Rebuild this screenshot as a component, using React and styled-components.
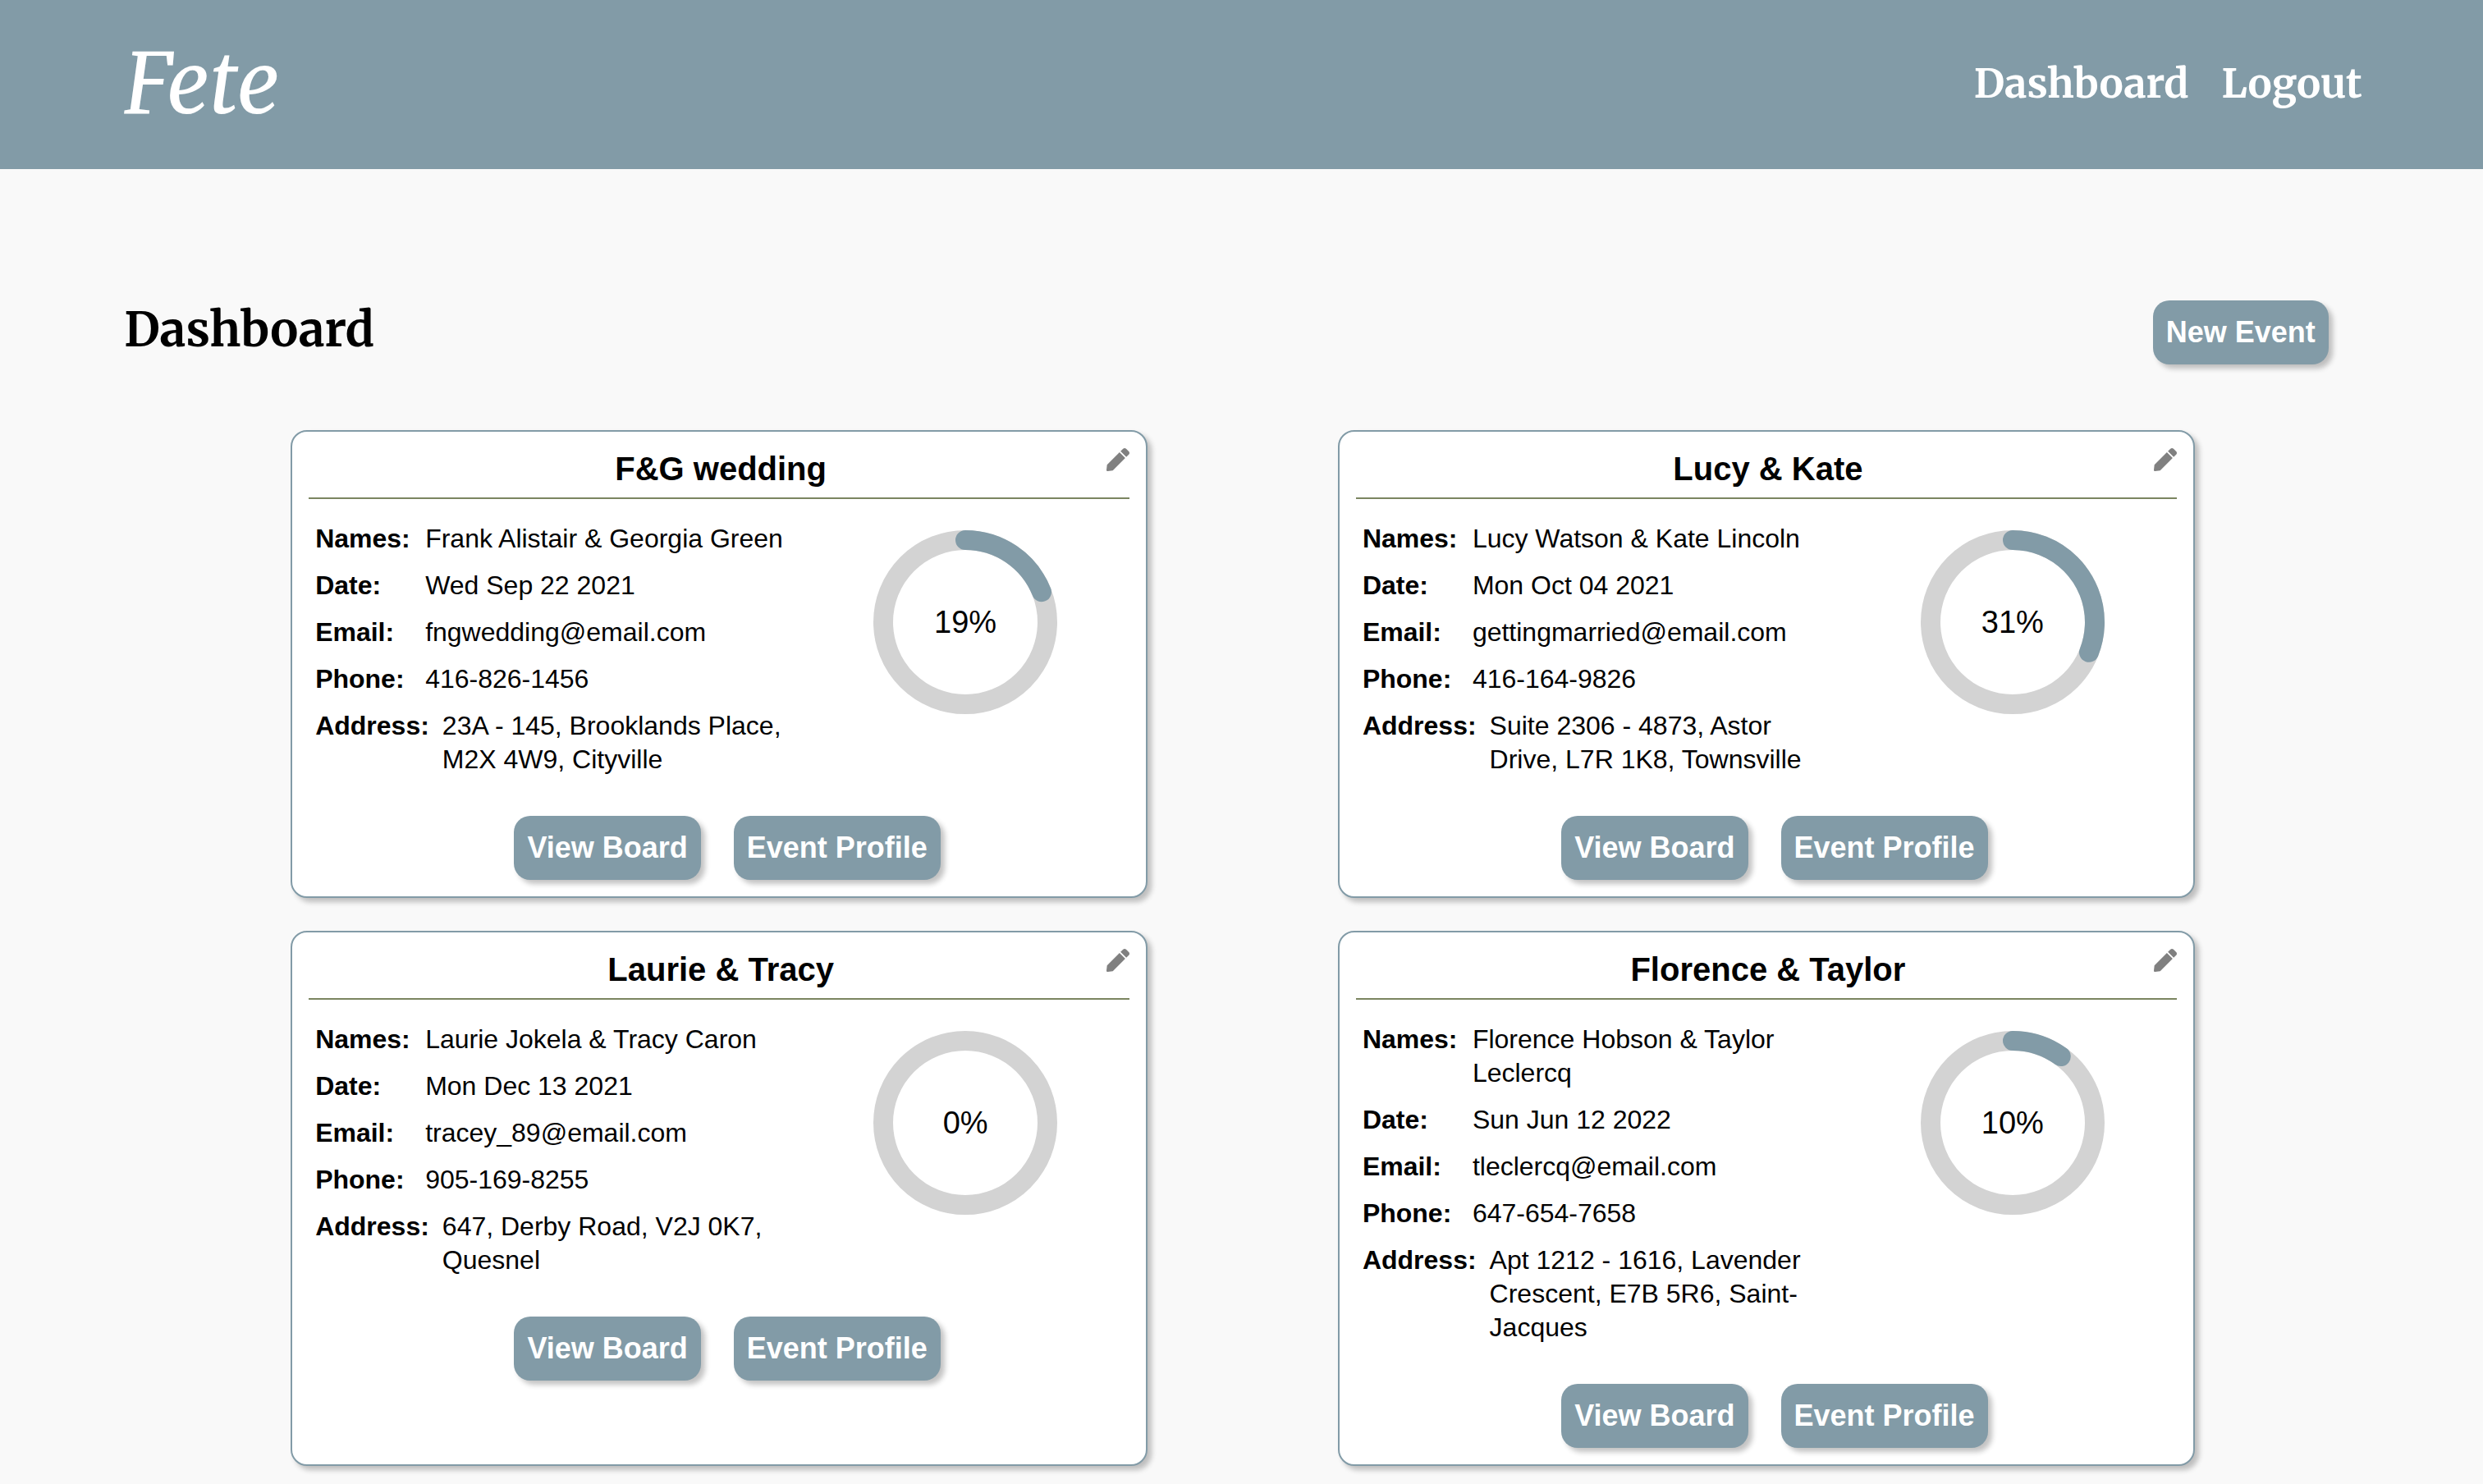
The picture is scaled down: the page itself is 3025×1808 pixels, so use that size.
import React from "react";
import styled, { createGlobalStyle } from "styled-components";
import { FaPen } from "react-icons/fa";

const color = {
  primary: "#829ba7",
  accent: "#7b8560",
  page: "#f9f9f9",
  track: "#d3d3d3",
  icon: "#808080",
};

const serif = '"Merriweather", "DejaVu Serif Condensed", "Liberation Serif", serif';
const sans = 'Arial, "Liberation Sans", sans-serif';
const shadow = "5px 5px 6px rgba(0, 0, 0, 0.24)";

const GlobalStyle = createGlobalStyle`
  *, *::before, *::after { box-sizing: border-box; }
  body {
    margin: 0;
    background: ${color.page};
    color: #000;
    font-family: ${sans};
    font-size: 32px;
    line-height: 41px;
  }
  h1, h2, dl, dd { margin: 0; }
`;

const Header = styled.header`
  display: flex;
  align-items: center;
  justify-content: space-between;
  min-height: 206px;
  padding: 0 calc(5% - 4px) 2px 5%;
  background: ${color.primary};
`;

const Brand = styled.a`
  color: #fff;
  font-family: ${serif};
  font-size: 102px;
  font-style: italic;
  line-height: 132px;
  text-decoration: none;
`;

const Nav = styled.nav`
  display: flex;
  gap: 40px;
`;

const NavLink = styled.a`
  color: #fff;
  font-family: ${serif};
  font-size: 49px;
  font-weight: 700;
  line-height: 64px;
  text-decoration: none;
`;

const Main = styled.main`
  padding: 160px 5% 40px;
`;

const TitleBar = styled.div`
  display: flex;
  align-items: center;
  justify-content: space-between;
  margin-bottom: 80px;
  padding-right: 37px;
`;

const PageTitle = styled.h1`
  padding-bottom: 6px;
  font-family: ${serif};
  font-size: 57px;
  font-weight: 700;
  line-height: 72px;
`;

const Button = styled.button`
  padding: 18px 16px;
  border: 0;
  border-radius: 20px;
  background: ${color.primary};
  box-shadow: ${shadow};
  color: #fff;
  cursor: pointer;
  font-family: ${sans};
  font-size: 36px;
  font-weight: 700;
  line-height: 42px;
  white-space: nowrap;
`;

const EventGrid = styled.div`
  display: grid;
  grid-template-columns: repeat(2, minmax(0, 1fr));
  justify-items: center;
  gap: 40px;
  padding: 0 104px 0 107px;
`;

const Card = styled.article`
  position: relative;
  width: 100%;
  max-width: 1044px;
  padding: 20px;
  border: 2px solid ${color.primary};
  border-radius: 20px;
  background: #fff;
  box-shadow: ${shadow};
`;

const CardTitle = styled.h2`
  padding: 0 0 10px 4px;
  border-bottom: 2px solid ${color.accent};
  font-size: 40px;
  font-weight: 700;
  line-height: 50px;
  text-align: center;
`;

const EditButton = styled.button`
  position: absolute;
  top: 20px;
  right: 20px;
  display: flex;
  padding: 0;
  border: 0;
  background: none;
  color: ${color.icon};
  cursor: pointer;
  font-size: 28px;
`;

const CardBody = styled.div`
  display: flex;
  align-items: flex-start;
  gap: 16px;
  padding: 28px 0 48px 8px;
`;

const Details = styled.dl`
  display: flex;
  flex-direction: column;
  flex: 0 1 576px;
  gap: 16px;
`;

const Detail = styled.div`
  display: flex;
  gap: 16px;
`;

const Term = styled.dt`
  flex: none;
  min-width: 118px;
  font-weight: 700;
`;

const Chart = styled.div`
  display: grid;
  flex: 1;
  place-items: center;
  padding-top: 10px;

  > * { grid-area: 1 / 1; }
`;

const Ring = styled.svg`
  display: block;
  width: 224px;
  height: 224px;
  fill: none;
  stroke-width: 24;
`;

const Percent = styled.span`
  font-size: 38px;
  line-height: 46px;
`;

const Actions = styled.div`
  display: flex;
  justify-content: center;
  gap: 40px;
  padding-left: 20px;
`;

function Progress({ value }) {
  return (
    <Chart>
      <Ring viewBox="0 0 224 224" aria-hidden="true">
        <circle cx="112" cy="112" r="100" stroke={color.track} />
        {value > 0 && (
          <circle
            cx="112"
            cy="112"
            r="100"
            pathLength="100"
            stroke={color.primary}
            strokeLinecap="round"
            strokeDasharray={`${value} 100`}
            transform="rotate(-90 112 112)"
          />
        )}
      </Ring>
      <Percent>{value}%</Percent>
    </Chart>
  );
}

function EventCard({ title, details, progress }) {
  return (
    <Card>
      <CardTitle>{title}</CardTitle>
      <EditButton type="button" aria-label={`Edit ${title}`}>
        <FaPen />
      </EditButton>
      <CardBody>
        <Details>
          {Object.entries(details).map(([term, text]) => (
            <Detail key={term}>
              <Term>{term}:</Term>
              <dd>{text}</dd>
            </Detail>
          ))}
        </Details>
        <Progress value={progress} />
      </CardBody>
      <Actions>
        <Button type="button">View Board</Button>
        <Button type="button">Event Profile</Button>
      </Actions>
    </Card>
  );
}

const events = [
  {
    title: "F&G wedding",
    progress: 19,
    details: {
      Names: "Frank Alistair & Georgia Green",
      Date: "Wed Sep 22 2021",
      Email: "fngwedding@email.com",
      Phone: "416-826-1456",
      Address: "23A - 145, Brooklands Place, M2X 4W9, Cityville",
    },
  },
  {
    title: "Lucy & Kate",
    progress: 31,
    details: {
      Names: "Lucy Watson & Kate Lincoln",
      Date: "Mon Oct 04 2021",
      Email: "gettingmarried@email.com",
      Phone: "416-164-9826",
      Address: "Suite 2306 - 4873, Astor Drive, L7R 1K8, Townsville",
    },
  },
  {
    title: "Laurie & Tracy",
    progress: 0,
    details: {
      Names: "Laurie Jokela & Tracy Caron",
      Date: "Mon Dec 13 2021",
      Email: "tracey_89@email.com",
      Phone: "905-169-8255",
      Address: "647, Derby Road, V2J 0K7, Quesnel",
    },
  },
  {
    title: "Florence & Taylor",
    progress: 10,
    details: {
      Names: "Florence Hobson & Taylor Leclercq",
      Date: "Sun Jun 12 2022",
      Email: "tleclercq@email.com",
      Phone: "647-654-7658",
      Address: "Apt 1212 - 1616, Lavender Crescent, E7B 5R6, Saint-Jacques",
    },
  },
];

export default function App() {
  return (
    <>
      <GlobalStyle />
      <Header>
        <Brand href="#">Fete</Brand>
        <Nav>
          <NavLink href="#dashboard">Dashboard</NavLink>
          <NavLink href="#logout">Logout</NavLink>
        </Nav>
      </Header>
      <Main>
        <TitleBar>
          <PageTitle>Dashboard</PageTitle>
          <Button type="button">New Event</Button>
        </TitleBar>
        <EventGrid>
          {events.map((event) => (
            <EventCard key={event.title} {...event} />
          ))}
        </EventGrid>
      </Main>
    </>
  );
}
